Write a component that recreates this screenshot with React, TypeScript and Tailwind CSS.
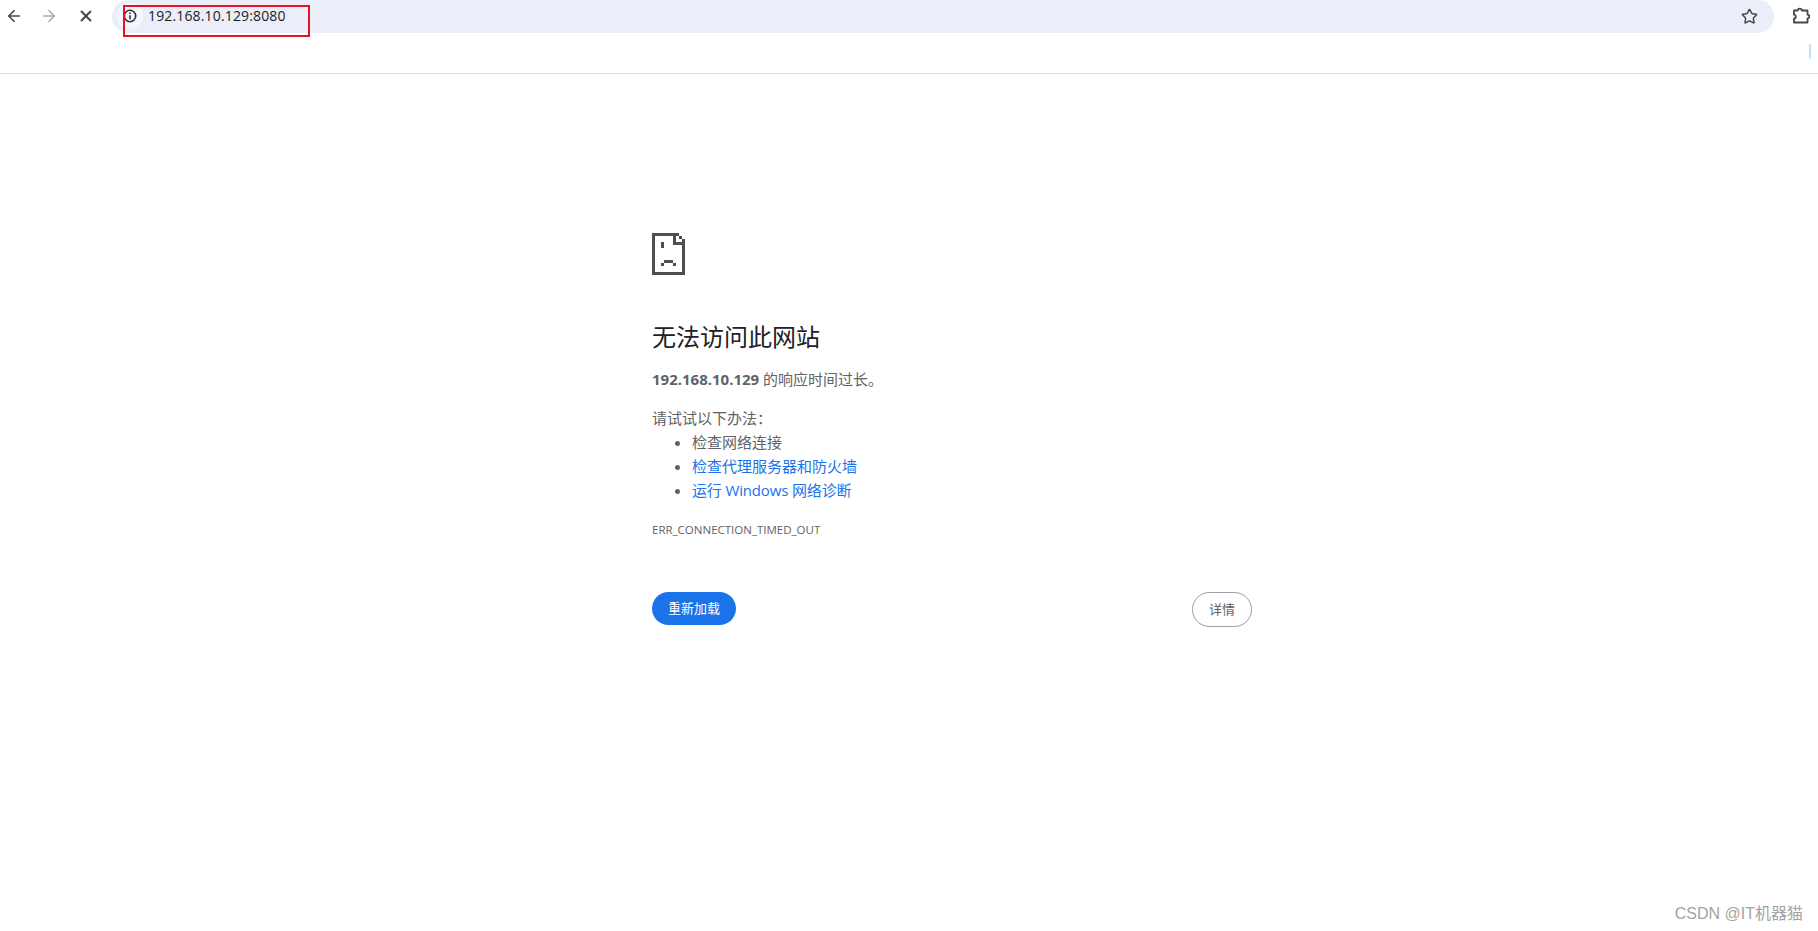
import { ArrowLeft, ArrowRight, X, Star } from 'lucide-react'

const FONT = "font-['Open_Sans','Noto_Sans_CJK_SC',sans-serif]"

function SadPage() {
  const cells = [
    'M0 0h9v1h-8v12h9v-11h1v12h-11z',
    'M9 1h1v1h-1z',
    'M7 0h1v3h3v1h-4z',
    'M3 3h1v2h-1z',
    'M4 9h3v1h-3z',
    'M3 10h1v1h-1z',
    'M7 10h1v1h-1z',
  ]
  return (
    <svg width="33" height="42" viewBox="0 0 11 14" shapeRendering="crispEdges" fill="#4e4e4e">
      {cells.map((d) => (
        <path key={d} d={d} />
      ))}
    </svg>
  )
}

function InfoIcon() {
  return (
    <svg width="14" height="14" viewBox="0 0 14 14" fill="none" stroke="#2f3135" strokeWidth="1.6">
      <circle cx="7" cy="7" r="5.7" />
      <path d="M7 6.2v4M7 3.5v1.6" />
    </svg>
  )
}

function ExtensionIcon() {
  return (
    <svg width="18" height="18" viewBox="0 0 18 18" fill="none" stroke="#474747" strokeWidth="1.8" strokeLinejoin="round">
      <path d="M2 3.5h3.8c0-2.6 4-2.6 4 0h5.7v4.2c2.4 0 2.4 3.6 0 3.6v4.2H2v-3.8c2.4 0 2.4-4 0-4z" />
    </svg>
  )
}

export default function App() {
  return (
    <div className={`relative flex h-[931px] flex-col bg-white ${FONT}`}>
      <div className="flex h-[74px] flex-col border-b border-[#e0e0e0]">
        <div className="flex h-[32px] items-center">
          <div className="flex w-[112px] items-center">
            <ArrowLeft size={18} strokeWidth={2.2} className="ml-[5px] text-[#474747]" />
            <ArrowRight size={18} strokeWidth={2.2} className="ml-[17px] text-[#a8a8a8]" />
            <X size={18} strokeWidth={2.6} className="ml-[19px] text-[#474747]" />
          </div>
          <div className="flex h-[33px] w-[1662px] items-center rounded-[17px] bg-[#ebeef8]">
            <div className="ml-[5px] flex h-[26px] w-[26px] items-center justify-center rounded-full bg-[#f6f7fc]">
              <InfoIcon />
            </div>
            <span className="ml-[5px] pb-[2px] text-[14px] tracking-[0.15px] text-[#202124]">192.168.10.129:8080</span>
            <Star size={17} strokeWidth={2.1} className="ml-auto mr-[16px] text-[#474747]" />
          </div>
          <div className="ml-[18px]">
            <ExtensionIcon />
          </div>
        </div>
        <div className="flex flex-1 items-center justify-end pr-[7px]">
          <div className="mb-[2px] h-[15px] w-[2px] bg-[#c9dcf8]" />
        </div>
      </div>

      <main className="pl-[652px] pt-[159px]">
        <div className="w-[600px]">
          <SadPage />
          <h1 className="mt-[46px] text-[24px] leading-[32px] font-normal text-[#202124]">无法访问此网站</h1>
          <p className="mt-[14px] text-[15px] leading-[24px] text-[#5f6368]">
            <strong className="font-bold">192.168.10.129</strong> 的响应时间过长。
          </p>
          <p className="mt-[15px] text-[15px] leading-[24px] text-[#5f6368]">请试试以下办法：</p>
          <ul className="list-disc pl-[40px] text-[15px] leading-[24px] text-[#5f6368]">
            <li>检查网络连接</li>
            <li className="text-[#1a73e8] marker:text-[#5f6368]">检查代理服务器和防火墙</li>
            <li className="text-[#1a73e8] tracking-[-0.15px] marker:text-[#5f6368]">运行 Windows 网络诊断</li>
          </ul>
          <div className="mt-[20px] text-[11.5px] leading-[16px] text-[#5f6368]">ERR_CONNECTION_TIMED_OUT</div>
          <div className="mt-[54px] flex items-start justify-between">
            <button className="h-[33px] w-[84px] rounded-[17px] bg-[#1a73e8] text-[13px] text-white">重新加载</button>
            <button className="h-[35px] w-[60px] rounded-[18px] border border-[#9aa0a6] bg-white text-[13px] text-[#5f6368]">详情</button>
          </div>
        </div>
      </main>

      <div className="pointer-events-none absolute left-[123px] top-[5px] h-[32px] w-[187px] border-2 border-[#e81123]" />
      <div className="absolute bottom-[7px] right-[15px] font-['Liberation_Sans','Noto_Sans_CJK_SC',sans-serif] text-[16px] leading-[20px] text-[#a3a3a3]">
        CSDN @IT机器猫
      </div>
    </div>
  )
}
